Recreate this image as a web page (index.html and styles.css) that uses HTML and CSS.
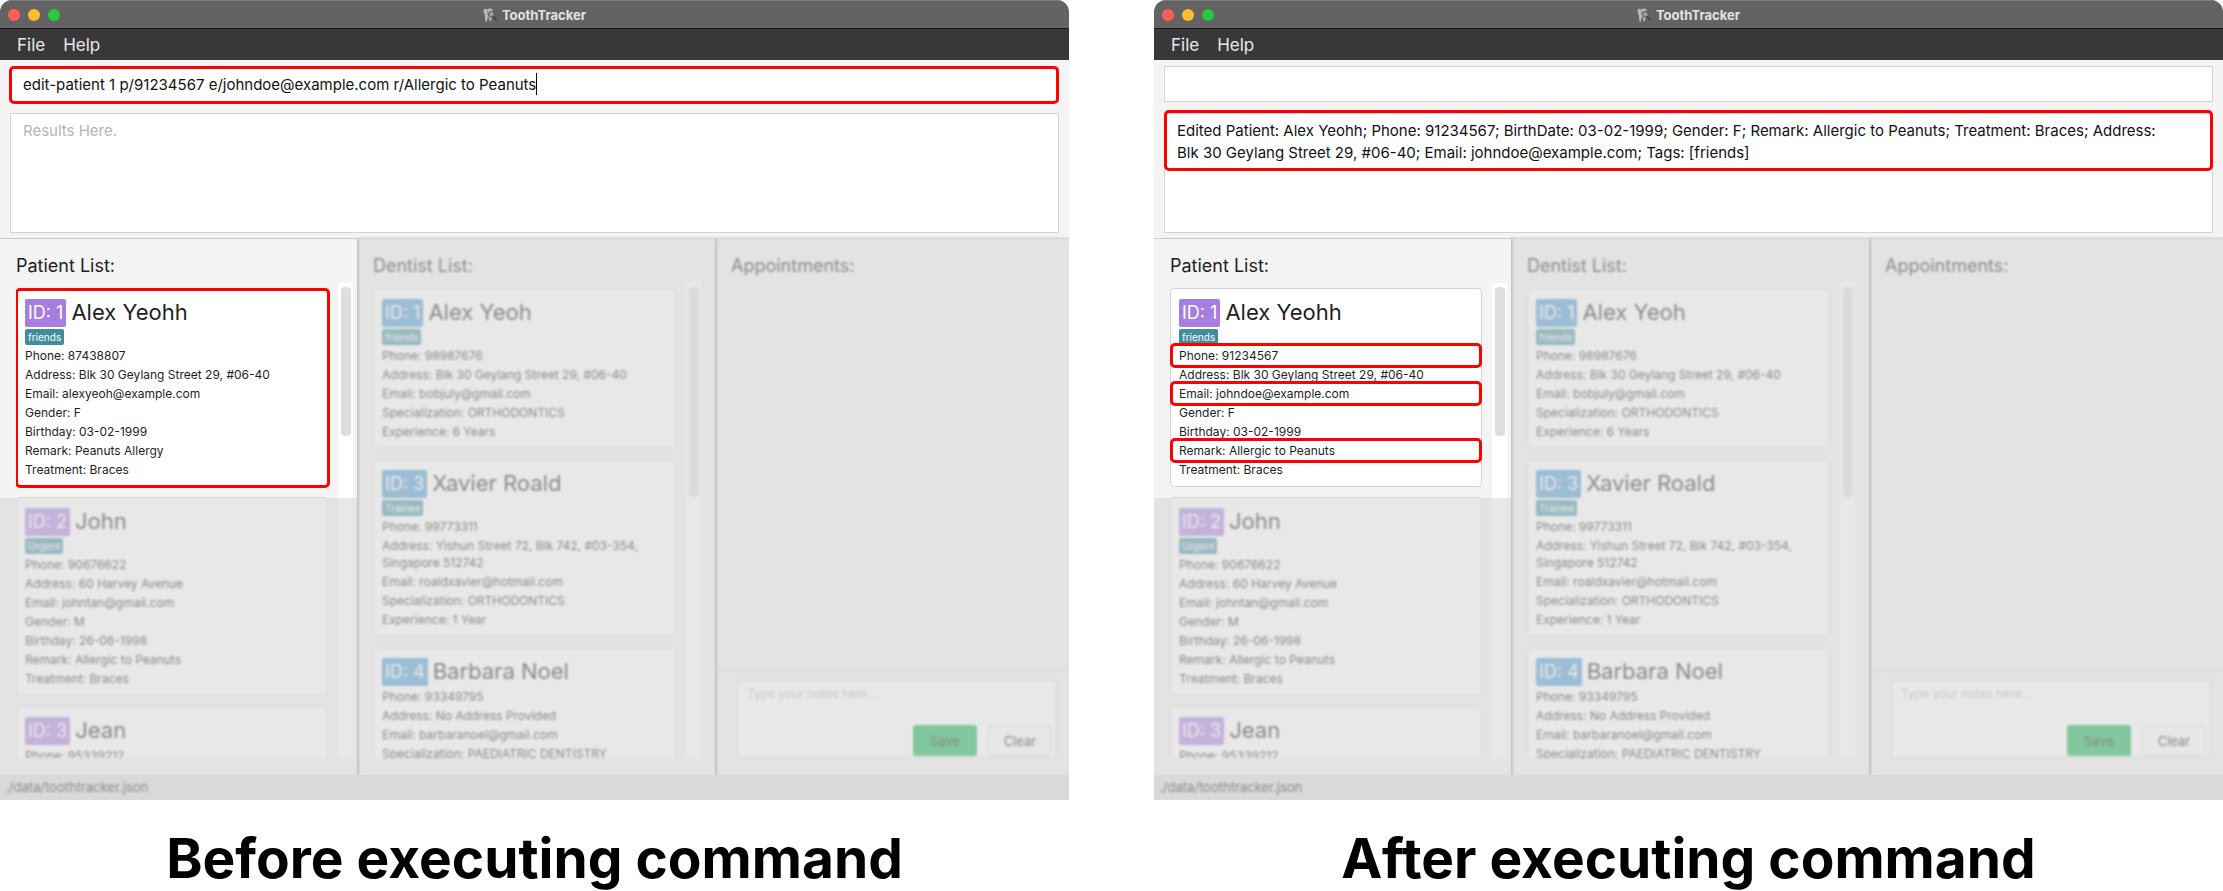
FILE: index.html
```html
<!DOCTYPE html>
<html lang="en">
<head>
<meta charset="utf-8">
<title>ToothTracker: editing a patient</title>
<link rel="stylesheet" href="styles.css">
</head>
<body>
<svg class="sprite" aria-hidden="true">
  <symbol id="tooth" viewBox="0 0 16 16">
    <path d="M.6 3.400C.6.600 2.800.200 5 1.400 7.500.200 10.400.200 11.200 2.600c.4 2-.4 3.400-.8 5-.4 2.200-.6 7.600-2.200 7.600-1.200 0-1-5-2.200-5s-.8 5.400-2.200 5.400c-1.800 0-1.400-5.400-1.700-7.400C1.600 6.600.6 5.200.6 3.400z" fill="#b8b8b8"/>
    <path d="M4.400 1.600 5.600 8" stroke="#868686" stroke-width=".8" fill="none"/>
    <circle cx="9.600" cy="7.200" r="3.400" fill="#9a9a9a" stroke="#4c4c4c" stroke-width="1.100"/>
    <path d="M12 10 15.200 14" stroke="#404040" stroke-width="1.600" stroke-linecap="round"/>
  </symbol>
</svg>
<main class="compare">
  <figure class="shot">
    <div class="window">
      <header class="titlebar">
        <div class="lights"><span class="light red"></span><span class="light amber"></span><span class="light green"></span></div>
        <div class="title"><svg class="logo" aria-hidden="true"><use href="#tooth"/></svg>ToothTracker</div>
      </header>
      <nav class="menubar"><button type="button">File</button><button type="button">Help</button></nav>
      <section class="console">
        <div class="command marked"><input type="text" aria-label="Command" value="edit-patient 1 p/91234567 e/johndoe@example.com r/Allergic to Peanuts"><span class="caret"></span></div>
        <div class="results"><textarea readonly aria-label="Results" placeholder="Results Here."></textarea></div>
      </section>
      <div class="panels">
        <section class="panel patients">
          <h2>Patient List:</h2>
          <div class="scroller">
            <div class="cards">
              <article class="card marked">
                <h3><span class="id">ID: 1</span>Alex Yeohh</h3>
                <span class="tag">friends</span>
                <p>Phone: 87438807</p>
                <p>Address: Blk 30 Geylang Street 29, #06-40</p>
                <p>Email: alexyeoh@example.com</p>
                <p>Gender: F</p>
                <p>Birthday: 03-02-1999</p>
                <p>Remark: Peanuts Allergy</p>
                <p>Treatment: Braces</p>
              </article>
              <article class="card">
                <h3><span class="id">ID: 2</span>John</h3>
                <span class="tag">Urgent</span>
                <p>Phone: 90676622</p>
                <p>Address: 60 Harvey Avenue</p>
                <p>Email: johntan@gmail.com</p>
                <p>Gender: M</p>
                <p>Birthday: 26-06-1998</p>
                <p>Remark: Allergic to Peanuts</p>
                <p>Treatment: Braces</p>
              </article>
              <article class="card">
                <h3><span class="id">ID: 3</span>Jean</h3>
                <p>Phone: 95339212</p>
              </article>
            </div>
            <div class="track"><div class="thumb"></div></div>
          </div>
        </section>
        <section class="panel dentists">
          <h2>Dentist List:</h2>
          <div class="scroller">
            <div class="cards">
              <article class="card">
                <h3><span class="id">ID: 1</span>Alex Yeoh</h3>
                <span class="tag">friends</span>
                <p>Phone: 98987676</p>
                <p>Address: Blk 30 Geylang Street 29, #06-40</p>
                <p>Email: bobjuly@gmail.com</p>
                <p>Specialization: ORTHODONTICS</p>
                <p>Experience: 6 Years</p>
              </article>
              <article class="card">
                <h3><span class="id">ID: 3</span>Xavier Roald</h3>
                <span class="tag">Trainee</span>
                <p>Phone: 99773311</p>
                <p>Address: Yishun Street 72, Blk 742, #03-354, Singapore 512742</p>
                <p>Email: roaldxavier@hotmail.com</p>
                <p>Specialization: ORTHODONTICS</p>
                <p>Experience: 1 Year</p>
              </article>
              <article class="card">
                <h3><span class="id">ID: 4</span>Barbara Noel</h3>
                <p>Phone: 93349795</p>
                <p>Address: No Address Provided</p>
                <p>Email: barbaranoel@gmail.com</p>
                <p>Specialization: PAEDIATRIC DENTISTRY</p>
              </article>
            </div>
            <div class="track"><div class="thumb"></div></div>
          </div>
        </section>
        <section class="panel appointments">
          <h2>Appointments:</h2>
          <div class="notes">
            <textarea aria-label="Notes" placeholder="Type your notes here..."></textarea>
            <div class="actions"><button type="button" class="save">Save</button><button type="button" class="clear">Clear</button></div>
          </div>
        </section>
      </div>
      <footer class="status">./data/toothtracker.json</footer>
    </div>
    <figcaption>Before executing command</figcaption>
  </figure>

  <figure class="shot">
    <div class="window">
      <header class="titlebar">
        <div class="lights"><span class="light red"></span><span class="light amber"></span><span class="light green"></span></div>
        <div class="title"><svg class="logo" aria-hidden="true"><use href="#tooth"/></svg>ToothTracker</div>
      </header>
      <nav class="menubar"><button type="button">File</button><button type="button">Help</button></nav>
      <section class="console">
        <div class="command"><input type="text" aria-label="Command"></div>
        <div class="results marked"><textarea readonly aria-label="Results">Edited Patient: Alex Yeohh; Phone: 91234567; BirthDate: 03-02-1999; Gender: F; Remark: Allergic to Peanuts; Treatment: Braces; Address: Blk 30 Geylang Street 29, #06-40; Email: johndoe@example.com; Tags: [friends]</textarea></div>
      </section>
      <div class="panels">
        <section class="panel patients">
          <h2>Patient List:</h2>
          <div class="scroller">
            <div class="cards">
              <article class="card">
                <h3><span class="id">ID: 1</span>Alex Yeohh</h3>
                <span class="tag">friends</span>
                <p class="marked">Phone: 91234567</p>
                <p>Address: Blk 30 Geylang Street 29, #06-40</p>
                <p class="marked">Email: johndoe@example.com</p>
                <p>Gender: F</p>
                <p>Birthday: 03-02-1999</p>
                <p class="marked">Remark: Allergic to Peanuts</p>
                <p>Treatment: Braces</p>
              </article>
              <article class="card">
                <h3><span class="id">ID: 2</span>John</h3>
                <span class="tag">Urgent</span>
                <p>Phone: 90676622</p>
                <p>Address: 60 Harvey Avenue</p>
                <p>Email: johntan@gmail.com</p>
                <p>Gender: M</p>
                <p>Birthday: 26-06-1998</p>
                <p>Remark: Allergic to Peanuts</p>
                <p>Treatment: Braces</p>
              </article>
              <article class="card">
                <h3><span class="id">ID: 3</span>Jean</h3>
                <p>Phone: 95339212</p>
              </article>
            </div>
            <div class="track"><div class="thumb"></div></div>
          </div>
        </section>
        <section class="panel dentists">
          <h2>Dentist List:</h2>
          <div class="scroller">
            <div class="cards">
              <article class="card">
                <h3><span class="id">ID: 1</span>Alex Yeoh</h3>
                <span class="tag">friends</span>
                <p>Phone: 98987676</p>
                <p>Address: Blk 30 Geylang Street 29, #06-40</p>
                <p>Email: bobjuly@gmail.com</p>
                <p>Specialization: ORTHODONTICS</p>
                <p>Experience: 6 Years</p>
              </article>
              <article class="card">
                <h3><span class="id">ID: 3</span>Xavier Roald</h3>
                <span class="tag">Trainee</span>
                <p>Phone: 99773311</p>
                <p>Address: Yishun Street 72, Blk 742, #03-354, Singapore 512742</p>
                <p>Email: roaldxavier@hotmail.com</p>
                <p>Specialization: ORTHODONTICS</p>
                <p>Experience: 1 Year</p>
              </article>
              <article class="card">
                <h3><span class="id">ID: 4</span>Barbara Noel</h3>
                <p>Phone: 93349795</p>
                <p>Address: No Address Provided</p>
                <p>Email: barbaranoel@gmail.com</p>
                <p>Specialization: PAEDIATRIC DENTISTRY</p>
              </article>
            </div>
            <div class="track"><div class="thumb"></div></div>
          </div>
        </section>
        <section class="panel appointments">
          <h2>Appointments:</h2>
          <div class="notes">
            <textarea aria-label="Notes" placeholder="Type your notes here..."></textarea>
            <div class="actions"><button type="button" class="save">Save</button><button type="button" class="clear">Clear</button></div>
          </div>
        </section>
      </div>
      <footer class="status">./data/toothtracker.json</footer>
    </div>
    <figcaption>After executing command</figcaption>
  </figure>
</main>
</body>
</html>
```
FILE: styles.css
```css
*, *::before, *::after { box-sizing: border-box; }

body {
  margin: 0;
  background: #fff;
  color: #1e1e1e;
  font-family: Inter, "Liberation Sans", sans-serif;
  font-size: 12px;
}

h2, h3, p, figure { margin: 0; font-weight: 400; }
button, input, textarea { font: inherit; color: inherit; }
.sprite { display: none; }

.compare {
  display: grid;
  grid-template-columns: 1fr 1fr;
  column-gap: 85px;
}

.shot { min-width: 0; }

figcaption {
  padding-top: 25px;
  text-align: center;
  font-size: 55px;
  line-height: 66px;
  font-weight: 700;
  color: #000;
}

.window {
  background: #f4f4f4;
  border-radius: 12px 12px 0 0;
  overflow: hidden;
}

/* title bar */
.titlebar {
  display: grid;
  grid-template-columns: 1fr auto 1fr;
  align-items: center;
  height: 29px;
  padding: 0 8px;
  background: #636363;
  border-top: 1px solid #7d7d7d;
  border-bottom: 1px solid #151515;
}
.lights { display: flex; gap: 8px; }
.light { width: 12px; height: 12px; border-radius: 50%; }
.red { background: #ff5f57; }
.amber { background: #febc2e; }
.green { background: #28c840; }
.title {
  display: flex;
  align-items: center;
  gap: 5px;
  font-size: 13px;
  line-height: 16px;
  font-weight: 700;
  color: #e2e2e2;
}
.logo { width: 14px; height: 14px; }

/* menus */
.menubar {
  display: flex;
  gap: 18px;
  height: 31px;
  padding: 0 17px;
  background: #383838;
}
.menubar button {
  padding: 0;
  border: 0;
  background: none;
  color: #e8e8e8;
  font-size: 17px;
}

/* command line and results */
.console {
  padding: 6px 10px 5px;
  border-bottom: 1px solid #c9c9c9;
  font-size: 15px;
  color: #111;
}
.command {
  position: relative;
  display: flex;
  align-items: center;
  height: 36px;
  margin-bottom: 11px;
  padding: 0 12px;
  background: #fff;
  border: 1px solid #d3d3d3;
}
.command input {
  flex: 1;
  min-width: 0;
  padding: 0;
  border: 0;
  outline: 0;
  background: none;
}
.command.marked input { flex: none; field-sizing: content; }
.caret { width: 1px; height: 22px; background: #000; }
.results { position: relative; }
.results textarea {
  display: block;
  width: 100%;
  height: 120px;
  padding: 6px 36px 6px 12px;
  border: 1px solid #d3d3d3;
  outline: 0;
  resize: none;
  overflow: hidden;
  background: #fff;
  line-height: 22px;
}
textarea::placeholder { color: #b5b5b5; opacity: 1; }

/* red frames that point out what changed */
.marked { position: relative; }
.marked::before {
  content: "";
  position: absolute;
  z-index: 1;
  border: 3px solid #f00;
  border-radius: 5px;
  pointer-events: none;
}
.command.marked::before { inset: -1px -1px -3px -2px; }
.results.marked::before { inset: -3px 0 auto 0; height: 61px; }
.card.marked::before { inset: -1px -3px -2px -2px; }
p.marked::before { inset: -4px -9px; }

/* list columns */
.panels {
  display: grid;
  grid-template-columns: 357fr 358fr 354fr;
  height: 536px;
}
.panel {
  position: relative;
  display: flex;
  flex-direction: column;
  min-width: 0;
  min-height: 0;
}
.dentists, .appointments { border-left: 2px solid #a6a6a6; }
.panel h2 {
  padding: 14px 0 5px 16px;
  font-size: 18px;
  line-height: 25px;
}
.dentists h2, .appointments h2 { padding-left: 14px; }

.scroller {
  flex: 1;
  display: flex;
  min-height: 0;
  margin: 0 4px 17px 16px;
  overflow: hidden;
}
.dentists .scroller { margin: 0 14px 17px 14px; }
.cards {
  flex: 1;
  min-width: 0;
  display: flex;
  flex-direction: column;
  gap: 10px;
  padding: 5px 10px 0 0;
}
.track { width: 15px; padding: 4px 2px 0 3px; background: #fff; }
.thumb { height: 149px; border-radius: 4px; background: #dedede; }
.dentists .thumb { height: 210px; }

.card {
  flex: none;
  display: flex;
  flex-direction: column;
  gap: 2px;
  padding: 10px 8px 8px;
  background: #fff;
  border: 1px solid #d3d3d3;
  border-radius: 4px;
}
.card h3 {
  display: flex;
  gap: 5px;
  font-size: 22px;
  line-height: 26px;
}
.id {
  height: 28px;
  padding: 0 3px;
  border-radius: 2px;
  background: #a87de0;
  color: #fff;
  font-size: 18px;
  line-height: 28px;
}
.dentists .id { background: #4698d2; }
.tag {
  align-self: flex-start;
  padding: 0 3px;
  border-radius: 2px;
  background: #3e8e9e;
  color: #fff;
  font-size: 10px;
  line-height: 16px;
}
.card p { line-height: 17px; }

/* notes box */
.notes {
  position: relative;
  margin-top: auto;
  padding: 8px 12px 17px 20px;
  border-top: 1px solid #cfcfcf;
}
.notes textarea {
  display: block;
  width: 100%;
  height: 78px;
  padding: 5px 9px;
  border: 1px solid #d3d3d3;
  resize: none;
  background: #fff;
}
.actions {
  position: absolute;
  right: 17px;
  bottom: 19px;
  display: flex;
  gap: 11px;
}
.actions button {
  width: 64px;
  height: 31px;
  padding: 0;
  border: 0;
  border-radius: 3px;
  font-size: 13px;
}
.actions .save { background: #0ab04b; }
.actions .clear { background: #fbfdfc; border: 1px solid #d8d8d8; border-radius: 5px; }

.status {
  position: relative;
  padding: 0 5px;
  background: #dbdbdb;
  font-size: 13px;
  line-height: 25px;
}

/* veil over everything that is not part of the example */
.panel::after, .status::after {
  content: "";
  position: absolute;
  inset: 0;
  z-index: 2;
  background: rgba(215, 215, 215, 0.585);
  backdrop-filter: blur(1px);
}
.patients::after { top: 259px; }
.dentists::after, .appointments::after { left: -2px; top: -2px; }
```
